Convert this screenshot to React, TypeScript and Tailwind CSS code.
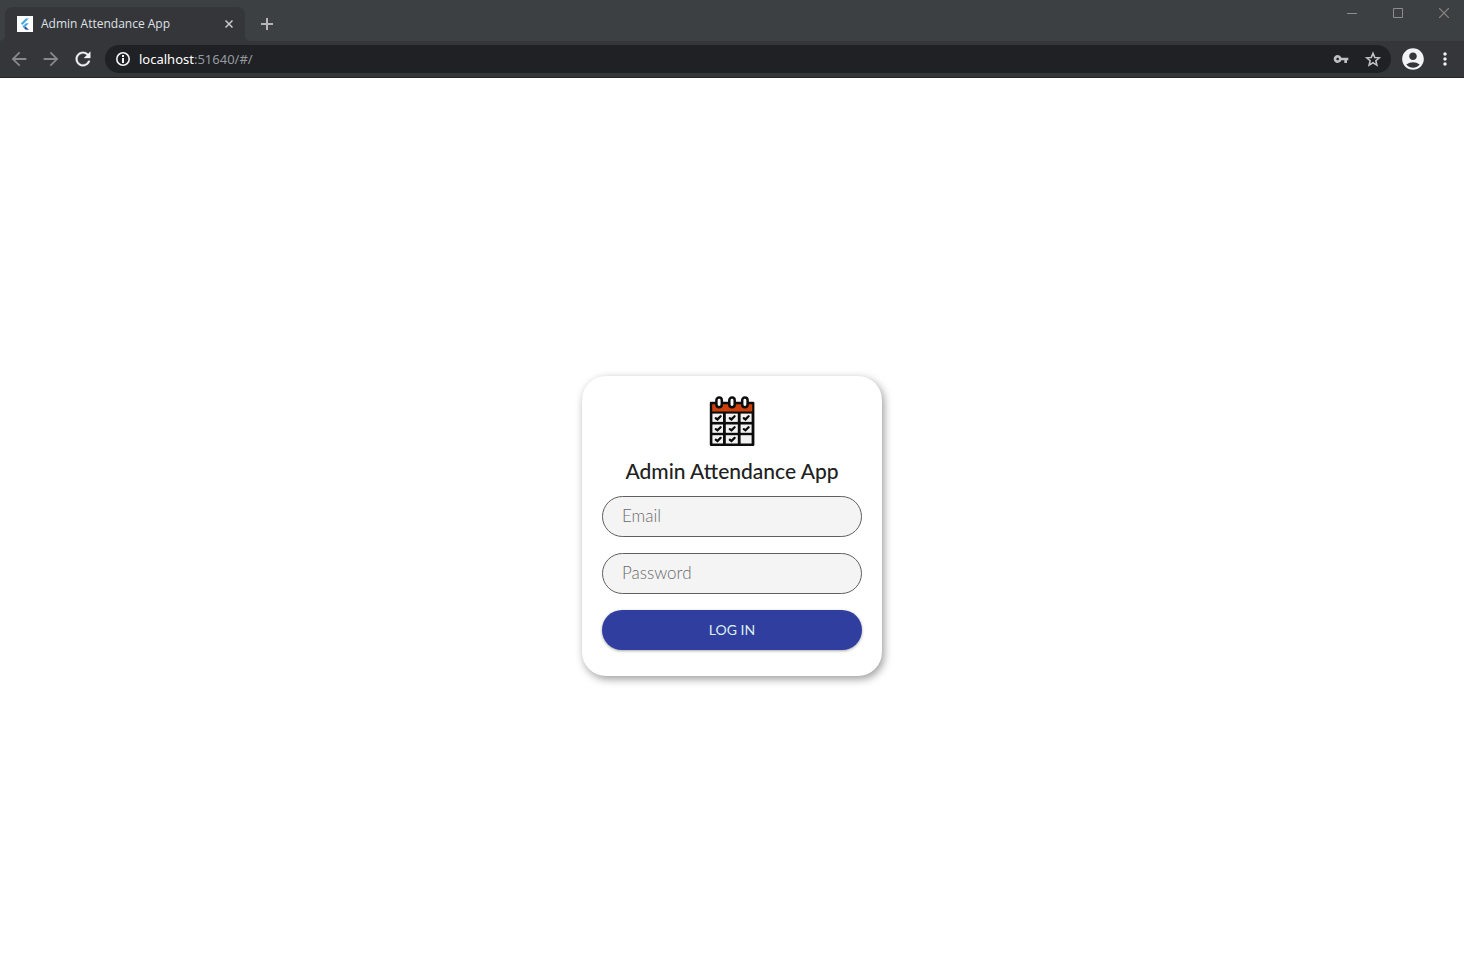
import type { ReactNode } from "react";
import { MdAccountCircle, MdArrowBack, MdArrowForward, MdMoreVert, MdVpnKey } from "react-icons/md";

function IconButton({ label, className = "", children }: { label: string; className?: string; children: ReactNode }) {
  return (
    <button type="button" aria-label={label} className={`flex shrink-0 items-center justify-center ${className}`}>
      {children}
    </button>
  );
}

function FlutterLogo() {
  return (
    <svg viewBox="0 0 16 16" className="size-4 shrink-0" aria-hidden="true">
      <path fill="#fff" d="M0 0h16v16H0z" />
      <path fill="#47a9e0" d="M8.8 2.4h3L5.4 9 3.8 7.5z" />
      <path fill="#47a9e0" d="M8.8 7.2h3L8.6 10.4 7 8.9z" />
      <path fill="#47a0da" d="M5.4 10.4 7 8.9l1.6 1.5L7 12z" />
      <path fill="#2b4b9f" d="m8.6 10.4 3.2 3.3h-3L7 12z" />
    </svg>
  );
}

function TabStrip() {
  return (
    <header className="flex h-[41px] items-start justify-between bg-[#3c4043]">
      <div className="flex items-end self-end">
        <svg viewBox="0 0 5 5" className="size-[5px]" aria-hidden="true">
          <path fill="#35363a" d="M5 0v5H0a5 5 0 0 0 5-5z" />
        </svg>
        <div className="flex h-[34px] w-60 items-center rounded-t-lg bg-[#35363a] pr-2 pl-3">
          <FlutterLogo />
          <span className="ml-2 flex-1 font-['Open_Sans',sans-serif] text-xs text-[#dfe1e5]">Admin Attendance App</span>
          <IconButton label="Close tab" className="size-4 text-[#c8cacd]">
            <svg viewBox="0 0 8 8" className="size-2" aria-hidden="true">
              <path d="m.5.5 7 7m0-7-7 7" stroke="currentColor" strokeWidth="1.5" />
            </svg>
          </IconButton>
        </div>
        <svg viewBox="0 0 5 5" className="size-[5px]" aria-hidden="true">
          <path fill="#35363a" d="M0 0v5h5a5 5 0 0 1-5-5z" />
        </svg>
        <IconButton label="New tab" className="ml-2 h-[34px] w-[18px] text-[#b4b6b8]">
          <svg viewBox="0 0 12 12" className="size-3" aria-hidden="true">
            <path d="M6 0v12M0 6h12" stroke="currentColor" strokeWidth="2" />
          </svg>
        </IconButton>
      </div>
      <div className="flex gap-1.5 text-[#8b8d8f]">
        <IconButton label="Minimize" className="h-[26px] w-10">
          <svg viewBox="0 0 10 10" className="size-2.5" aria-hidden="true">
            <path d="M0 5.5h10" stroke="currentColor" />
          </svg>
        </IconButton>
        <IconButton label="Maximize" className="h-[26px] w-10">
          <svg viewBox="0 0 10 10" className="size-2.5" aria-hidden="true">
            <path d="M.5.5h9v9h-9z" fill="none" stroke="currentColor" />
          </svg>
        </IconButton>
        <IconButton label="Close window" className="h-[26px] w-10 text-[#8d8681]">
          <svg viewBox="0 0 10 10" className="size-2.5" aria-hidden="true">
            <path d="m0 0 10 10M10 0 0 10" stroke="currentColor" strokeWidth="1.2" />
          </svg>
        </IconButton>
      </div>
    </header>
  );
}

function Toolbar() {
  return (
    <nav className="flex h-[37px] items-center border-b border-[#242427] bg-[#35363a] pr-[9px] pl-1.5" aria-label="Browser">
      <div className="flex gap-1.5">
        <IconButton label="Back" className="w-[26px] text-[#88898b]">
          <MdArrowBack size={22} />
        </IconButton>
        <IconButton label="Forward" className="w-[26px] text-[#88898b]">
          <MdArrowForward size={22} />
        </IconButton>
        <IconButton label="Reload" className="w-[26px] text-[#f1f3f4]">
          <svg viewBox="0 0 24 24" className="size-[22px]" aria-hidden="true">
            <path
              fill="currentColor"
              stroke="currentColor"
              strokeWidth="0.3"
              d="M17.65 6.35A7.958 7.958 0 0 0 12 4c-4.42 0-7.99 3.58-7.99 8s3.57 8 7.99 8c3.73 0 6.84-2.55 7.73-6h-2.08A5.99 5.99 0 0 1 12 18c-3.31 0-6-2.69-6-6s2.69-6 6-6c1.66 0 3.14.69 4.22 1.78L13 11h7V4l-2.35 2.35z"
            />
          </svg>
        </IconButton>
      </div>
      <div className="ml-[9px] flex h-7 flex-1 items-center rounded-full bg-[#202124] pr-[9px] pl-[11px]">
        <svg viewBox="0 0 14 14" className="size-3.5 shrink-0 text-[#f1f3f4]" aria-hidden="true">
          <circle cx="7" cy="7" r="6.2" fill="none" stroke="currentColor" strokeWidth="1.6" />
          <path fill="currentColor" d="M6 3h2v2H6zM6 6h2v5H6z" />
        </svg>
        <a
          href="#/"
          className="ml-[9px] flex-1 font-['Noto_Sans',sans-serif] text-[13px] leading-5 text-[#9499a0]"
        >
          <span className="text-white">localhost</span>:51640/#/
        </a>
        <div className="flex items-center gap-[15px] text-[#bdc1c6]">
          <IconButton label="Saved passwords">
            <MdVpnKey size={16} />
          </IconButton>
          <IconButton label="Bookmark this page">
            <svg viewBox="0 0 24 24" className="size-[18px]" aria-hidden="true">
              <path
                fill="none"
                stroke="currentColor"
                strokeWidth="2.1"
                d="m12 4.4 2.3 5.5 6 .5-4.5 3.9 1.4 5.8-5.2-3.1-5.2 3.1 1.4-5.8-4.5-3.9 6-.5z"
              />
            </svg>
          </IconButton>
        </div>
      </div>
      <IconButton label="Profile" className="ml-[9px] w-[26px] text-[#f1f3f4]">
        <MdAccountCircle size={26} />
      </IconButton>
      <IconButton label="Menu" className="ml-[9px] w-5 text-[#f1f3f4]">
        <MdMoreVert size={20} />
      </IconButton>
    </nav>
  );
}

const columns = [
  { x: 3.4, width: 10.6, check: 9 },
  { x: 16.8, width: 12, check: 23 },
  { x: 31.6, width: 11, check: 37 },
];
const rows = [17.6, 28.5, 39.2];

function CalendarLogo() {
  return (
    <svg viewBox="0 0 46 51" className="h-[51px] w-[46px]" aria-hidden="true">
      <rect x="0.8" y="5.8" width="44.6" height="44.2" rx="1.2" fill="#0c0c0c" />
      <path fill="#cc400c" d="M3.2 8.2h40v7.4h-40z" />
      {[10.1, 23, 35.9].map((x) => (
        <rect key={x} x={x - 2.7} y="1.5" width="5.4" height="9.8" rx="2.7" fill="#fff" stroke="#0c0c0c" strokeWidth="2.5" />
      ))}
      {rows.map((y, row) =>
        columns.map((column, index) => (
          <g key={`${index}-${row}`}>
            <rect x={column.x} y={y} width={column.width} height="8.3" fill="#f2f2f2" />
            {!(row === 2 && index === 2) && (
              <path
                d={`M${column.check - 2.2} ${y + 4.6}l1.7 1.2 3.1-3.1`}
                fill="none"
                stroke="#0c0c0c"
                strokeWidth="2.3"
                strokeLinecap="round"
              />
            )}
          </g>
        )),
      )}
    </svg>
  );
}

const fieldClass =
  "h-[41px] w-full rounded-full border border-[#5f5f5f] bg-[#f4f4f4] px-[19px] pb-[3px] text-[17px] font-light text-[#333] outline-none placeholder:text-[#6b6b6b]";

function LoginCard() {
  return (
    <form
      onSubmit={(event) => event.preventDefault()}
      className="flex w-[300px] flex-col items-center rounded-3xl bg-white px-5 pt-5 pb-[26px] font-['Lato',sans-serif] shadow-[2px_3px_8px_rgba(0,0,0,0.4)]"
    >
      <CalendarLogo />
      <h1 className="mt-2.5 text-[21px] leading-7 font-medium text-[#212121]">Admin Attendance App</h1>
      <div className="mt-[11px] flex w-full flex-col gap-4">
        <input type="email" aria-label="Email" placeholder="Email" className={fieldClass} />
        <input type="password" aria-label="Password" placeholder="Password" className={fieldClass} />
        <button
          type="submit"
          className="h-10 rounded-full bg-[#303f9f] text-sm text-[#dcefed] shadow-[0_1px_3px_rgba(0,0,0,0.35)]"
        >
          LOG IN
        </button>
      </div>
    </form>
  );
}

export default function App() {
  return (
    <div className="flex min-h-screen flex-col bg-white">
      <TabStrip />
      <Toolbar />
      <main className="flex flex-1 items-center justify-center pt-0.5">
        <LoginCard />
      </main>
    </div>
  );
}
